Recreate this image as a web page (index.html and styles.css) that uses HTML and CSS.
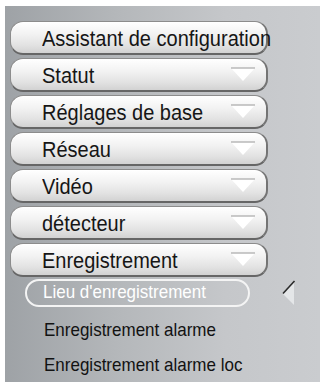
FILE: index.html
```html
<!DOCTYPE html>
<html lang="fr">
<head>
<meta charset="utf-8">
<link rel="stylesheet" href="styles.css">
</head>
<body>
<div class="panel">
  <div class="menu">
    <div class="btn"><span class="label">Assistant de configuration</span></div>
    <div class="btn"><span class="label">Statut</span><svg class="arrow" viewBox="0 0 26 15" width="26" height="15"><polygon points="1,1 25,1 13,14" fill="#ffffff"/><line x1="1" y1="1" x2="25" y2="1" stroke="#b8b8b8" stroke-width="1.5"/></svg></div>
    <div class="btn"><span class="label">Réglages de base</span><svg class="arrow" viewBox="0 0 26 15" width="26" height="15"><polygon points="1,1 25,1 13,14" fill="#ffffff"/><line x1="1" y1="1" x2="25" y2="1" stroke="#b8b8b8" stroke-width="1.5"/></svg></div>
    <div class="btn"><span class="label">Réseau</span><svg class="arrow" viewBox="0 0 26 15" width="26" height="15"><polygon points="1,1 25,1 13,14" fill="#ffffff"/><line x1="1" y1="1" x2="25" y2="1" stroke="#b8b8b8" stroke-width="1.5"/></svg></div>
    <div class="btn"><span class="label">Vidéo</span><svg class="arrow" viewBox="0 0 26 15" width="26" height="15"><polygon points="1,1 25,1 13,14" fill="#ffffff"/><line x1="1" y1="1" x2="25" y2="1" stroke="#b8b8b8" stroke-width="1.5"/></svg></div>
    <div class="btn"><span class="label">détecteur</span><svg class="arrow" viewBox="0 0 26 15" width="26" height="15"><polygon points="1,1 25,1 13,14" fill="#ffffff"/><line x1="1" y1="1" x2="25" y2="1" stroke="#b8b8b8" stroke-width="1.5"/></svg></div>
    <div class="btn"><span class="label">Enregistrement</span><svg class="arrow" viewBox="0 0 26 15" width="26" height="15"><polygon points="1,1 25,1 13,14" fill="#ffffff"/><line x1="1" y1="1" x2="25" y2="1" stroke="#b8b8b8" stroke-width="1.5"/></svg></div>
  </div>
  <div class="sub">
    <div class="sub-active-row">
      <div class="pill"><span class="pill-text">Lieu d'enregistrement</span></div>
      <svg class="pointer" viewBox="0 0 14 26" width="14" height="26"><polygon points="12,1 1,14 12,25" fill="#e4e6e8"/><line x1="12.5" y1="1" x2="1" y2="13.5" stroke="#2a2a2a" stroke-width="1.6"/></svg>
    </div>
    <div class="sub-item"><span class="sub-text">Enregistrement alarme</span></div>
    <div class="sub-item"><span class="sub-text">Enregistrement alarme loc</span></div>
  </div>
</div>
</body>
</html>
```

FILE: styles.css
```css
html, body {
  margin: 0;
  padding: 0;
  background: #ffffff;
}

body {
  font-family: "Liberation Sans", Arial, sans-serif;
}

.panel {
  margin: 6px 1px 0 5px;
  height: 376px;
  background: linear-gradient(to right, #9ea2a6 0%, #b4b7ba 35%, #c5c7ca 70%, #cacccf 100%);
  overflow: hidden;
}

.menu {
  display: flex;
  flex-direction: column;
  gap: 3px;
  padding: 15px 0 0 5px;
}

.btn {
  box-sizing: border-box;
  width: 258px;
  height: 34px;
  border: 1px solid #8c8c8c;
  border-bottom: 2px solid #666666;
  border-right: 2px solid #747474;
  border-radius: 13px;
  background: linear-gradient(to bottom, #ffffff 0%, #f2f2f2 40%, #e2e2e2 75%, #d2d2d2 100%);
  box-shadow: inset 0 1px 0 #ffffff;
  display: flex;
  align-items: center;
  padding-left: 31px;
  padding-right: 10px;
  white-space: nowrap;
}

.label {
  display: inline-block;
  font-size: 20px;
  color: #161616;
  line-height: 22px;
  transform: scaleY(1.1);
  transform-origin: left center;
}

.arrow {
  margin-left: auto;
  flex: none;
  display: block;
}

.sub {
  display: flex;
  flex-direction: column;
}

.sub-active-row {
  display: flex;
  align-items: center;
  margin-top: 2px;
  padding-left: 20px;
}

.pill {
  box-sizing: border-box;
  width: 225px;
  height: 28px;
  border: 2px solid #f4f4f4;
  border-radius: 14px;
  color: #ffffff;
  font-size: 17px;
  line-height: 24px;
  padding-left: 16px;
  white-space: nowrap;
}

.pill-text,
.sub-text {
  display: inline-block;
  transform: scaleY(1.08);
  transform-origin: left center;
}

.pointer {
  display: block;
  margin-left: 32px;
  flex: none;
}

.sub-item {
  height: 35px;
  line-height: 35px;
  padding-left: 39px;
  font-size: 17px;
  color: #121212;
  white-space: nowrap;
}

.sub-active-row + .sub-item {
  margin-top: 6px;
}
```
